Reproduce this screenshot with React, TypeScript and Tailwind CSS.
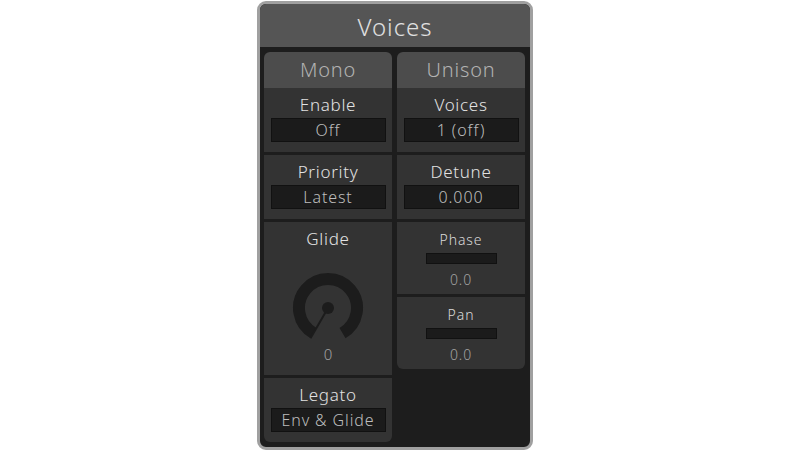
import React from 'react';

type FieldProps = { label: string; value: string };

const Field = ({ label, value }: FieldProps) => (
  <div className="h-[64px] bg-[#333333] flex flex-col items-center pt-[5px]">
    <div className="h-[24px] leading-[24px] text-[17px] tracking-[0.7px] text-[#e2e2e2]">{label}</div>
    <div className="mt-[1px] w-[115px] h-[24px] bg-[#1b1b1b] border border-[#111111] flex items-center justify-center text-[16px] leading-none tracking-[0.9px] text-[#bdbdbd]">
      {value}
    </div>
  </div>
);

const Slider = ({ label, value }: FieldProps) => (
  <div className="h-[72px] bg-[#333333] flex flex-col items-center pt-[8px]">
    <div className="h-[20px] leading-[20px] text-[14px] tracking-[0.9px] text-[#dadada]">{label}</div>
    <div className="mt-[3px] w-[71px] h-[11px] bg-[#1b1b1b] border border-[#111111]" />
    <div className="mt-[6px] h-[20px] leading-[20px] text-[14px] tracking-[0.9px] text-[#a3a3a3]">{value}</div>
  </div>
);

const Knob = () => {
  // 300° ring, gap of ±30° around the bottom; value 0 puts the pointer at the start
  const r = 29;
  const s = Math.sin(Math.PI / 6);
  const c = Math.cos(Math.PI / 6);
  const x0 = 36 - r * s;
  const x1 = 36 + r * s;
  const y = 36 + r * c;
  return (
    <svg width="72" height="72" viewBox="0 0 72 72">
      <path
        d={`M ${x0} ${y} A ${r} ${r} 0 1 1 ${x1} ${y}`}
        fill="none"
        stroke="#1c1c1c"
        strokeWidth="12"
      />
      <line x1="36" y1="36" x2={36 - 35 * s} y2={36 + 35 * c} stroke="#1c1c1c" strokeWidth="2" />
      <circle cx="36" cy="36" r="6" fill="#1c1c1c" />
    </svg>
  );
};

const Header = ({ title }: { title: string }) => (
  <div className="h-[36px] bg-[#4c4c4c] flex items-center justify-center text-[20px] tracking-[0.8px] text-[#b2b2b2]">
    {title}
  </div>
);

export default function App() {
  return (
    <div className="min-h-screen bg-white flex justify-center pt-[1px] font-['Noto_Sans',sans-serif] font-light">
      <div className="w-[276px] h-[449px] border-[3px] border-[#a0a0a0] rounded-[9px] bg-[#1d1d1d] flex flex-col overflow-hidden">
        <div className="h-[43px] shrink-0 bg-[#555555] flex items-center justify-center pt-[3px] text-[24px] tracking-[1px] text-[#e0e0e0]">
          Voices
        </div>

        <div className="flex items-start gap-[5px] pl-[4px] pr-[5px] pt-[5px]">
          <div className="w-[128px] flex flex-col gap-[3px] rounded-[6px] overflow-hidden">
            <div>
              <Header title="Mono" />
              <Field label="Enable" value="Off" />
            </div>
            <Field label="Priority" value="Latest" />
            <div className="h-[153px] bg-[#333333] flex flex-col items-center pt-[5px]">
              <div className="h-[24px] leading-[24px] text-[17px] tracking-[0.7px] text-[#e2e2e2]">Glide</div>
              <div className="mt-[21px]">
                <Knob />
              </div>
              <div className="mt-0 h-[20px] leading-[20px] text-[15px] text-[#a3a3a3]">0</div>
            </div>
            <Field label="Legato" value="Env & Glide" />
          </div>

          <div className="w-[128px] flex flex-col gap-[3px] rounded-[6px] overflow-hidden">
            <div>
              <Header title="Unison" />
              <Field label="Voices" value="1 (off)" />
            </div>
            <Field label="Detune" value="0.000" />
            <Slider label="Phase" value="0.0" />
            <Slider label="Pan" value="0.0" />
          </div>
        </div>
      </div>
    </div>
  );
}
